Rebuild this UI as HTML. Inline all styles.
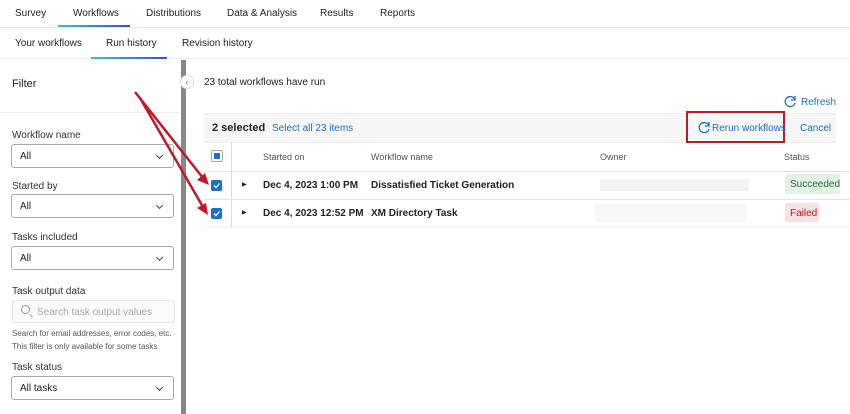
<!DOCTYPE html><html><head><style>
*{box-sizing:border-box;margin:0;padding:0}
body{width:850px;height:414px;overflow:hidden;background:#fff;font-family:"Liberation Sans",sans-serif;color:#222;position:relative;font-size:10px}
.a{position:absolute}
.nav1{top:0;left:0;width:850px;height:28px;border-bottom:1px solid #e8e8e8}
.nav2{top:28px;left:0;width:850px;height:31px;border-bottom:1px solid #eee}
.sel{border:1px solid #aaa;border-radius:3px;height:24px;width:163px;left:11px;font-size:10px;padding:6px 8px;background:#fff}
.sel:after{content:"";position:absolute;right:11px;top:8px;width:4px;height:4px;border-right:1px solid #444;border-bottom:1px solid #444;transform:rotate(45deg)}
.lbl{left:12px;font-size:10px;color:#333}
.cb{width:11px;height:11px;background:#1a6fd6;border-radius:2px}
.bold{font-weight:bold;font-size:10px}
</style></head><body>
<div class="a nav1"></div>
<div class="a" style="top:8px;left:15px">Survey</div>
<div class="a" style="top:8px;left:73px">Workflows</div>
<div class="a" style="top:8px;left:146px">Distributions</div>
<div class="a" style="top:8px;left:227px">Data &amp; Analysis</div>
<div class="a" style="top:8px;left:320px">Results</div>
<div class="a" style="top:8px;left:380px">Reports</div>
<div class="a" style="top:25px;left:58px;width:72px;height:2px;background:linear-gradient(90deg,#2cc6d6,#3355cc)"></div>
<div class="a nav2"></div>
<div class="a" style="top:38px;left:15px">Your workflows</div>
<div class="a" style="top:38px;left:106px">Run history</div>
<div class="a" style="top:38px;left:182px">Revision history</div>
<div class="a" style="top:57px;left:91px;width:76px;height:2px;background:linear-gradient(90deg,#2cc6d6,#3355cc)"></div>
<div class="a" style="top:60px;left:181px;width:5px;height:354px;background:#888"></div>
<div class="a" style="top:75px;left:180px;width:14px;height:14px;border-radius:7px;border:1px solid #ddd;background:#fff;font-size:9px;text-align:center;line-height:12px;color:#666">‹</div>
<div class="a" style="top:78px;left:12px;font-size:11px">Filter</div>
<div class="a" style="top:112px;left:0;width:180px;height:1px;background:#eee"></div>
<div class="a lbl" style="top:130px">Workflow name</div>
<div class="a sel" style="top:144px">All</div>
<div class="a lbl" style="top:181px">Started by</div>
<div class="a sel" style="top:194px">All</div>
<div class="a lbl" style="top:232px">Tasks included</div>
<div class="a sel" style="top:246px">All</div>
<div class="a lbl" style="top:286px">Task output data</div>
<div class="a" style="top:300px;left:12px;width:163px;height:23px;border:1px solid #e4e4e4;border-radius:3px;background:#fafafa;color:#aaa;padding:6px 0 0 24px">Search task output values</div>
<div class="a" style="top:305px;left:21px;width:9px;height:9px;border:1.3px solid #999;border-radius:50%"></div>
<div class="a" style="top:315px;left:29px;width:4px;height:1.3px;background:#999;transform:rotate(45deg)"></div>
<div class="a" style="top:327px;left:12px;font-size:8px;color:#555;line-height:13px">Search for email addresses, error codes, etc.<br>This filter is only available for some tasks</div>
<div class="a lbl" style="top:362px">Task status</div>
<div class="a sel" style="top:376px">All tasks</div>

<div class="a" style="top:77px;left:204px">23 total workflows have run</div>
<svg class="a" style="top:95px;left:783px" width="14" height="14" viewBox="0 0 14 14"><path d="M11.5 4A5 5 0 1 0 12 8" fill="none" stroke="#1a6fd6" stroke-width="1.3"/><path d="M12 1v4H8" fill="none" stroke="#1a6fd6" stroke-width="1.3"/></svg>
<div class="a" style="top:97px;left:801px;color:#1a6fd6">Refresh</div>
<div class="a" style="top:113px;left:204px;width:632px;height:30px;background:#f6f6f6;border-top:1px solid #eee;border-bottom:1px solid #eee"></div>
<div class="a" style="top:122px;left:212px;font-weight:bold;font-size:11px">2 selected</div>
<div class="a" style="top:123px;left:272px;color:#1a6fd6">Select all 23 items</div>
<div class="a" style="top:111px;left:686px;width:99px;height:32px;border:2px solid #c01a2a"></div>
<svg class="a" style="top:121px;left:697px" width="14" height="14" viewBox="0 0 14 14"><path d="M11.5 4A5 5 0 1 0 12 8" fill="none" stroke="#1a6fd6" stroke-width="1.3"/><path d="M12 1v4H8" fill="none" stroke="#1a6fd6" stroke-width="1.3"/></svg>
<div class="a" style="top:123px;left:712px;color:#1a6fd6">Rerun workflows</div>
<div class="a" style="top:123px;left:800px;color:#1a6fd6">Cancel</div>
<div class="a" style="top:143px;left:231px;width:1px;height:84px;background:#ddd"></div>
<div class="a" style="top:150px;left:211px;width:12px;height:12px;border:1px solid #aaa;border-radius:2px;background:#fff"></div>
<div class="a" style="top:153px;left:214px;width:6px;height:6px;background:#1a6fd6"></div>
<div class="a" style="top:152px;left:263px;font-size:9px;color:#555">Started on</div>
<div class="a" style="top:152px;left:371px;font-size:9px;color:#555">Workflow name</div>
<div class="a" style="top:152px;left:600px;font-size:9px;color:#555">Owner</div>
<div class="a" style="top:152px;left:784px;font-size:9px;color:#555">Status</div>
<div class="a" style="top:171px;left:204px;width:646px;height:1px;background:#e4e4e4"></div>
<div class="a" style="top:199px;left:204px;width:646px;height:1px;background:#e4e4e4"></div>
<div class="a" style="top:227px;left:204px;width:646px;height:1px;background:#f0f0f0"></div>
<div class="a cb" style="top:180px;left:211px"></div>
<div class="a cb" style="top:208px;left:211px"></div>
<div class="a" style="top:181px;left:242px;font-size:6px">▶</div>
<div class="a" style="top:209px;left:242px;font-size:6px">▶</div>
<div class="a bold" style="top:180px;left:263px">Dec 4, 2023 1:00 PM</div>
<div class="a bold" style="top:180px;left:371px">Dissatisfied Ticket Generation</div>
<div class="a bold" style="top:208px;left:263px">Dec 4, 2023 12:52 PM</div>
<div class="a bold" style="top:208px;left:371px">XM Directory Task</div>
<div class="a" style="top:179px;left:600px;width:149px;height:12px;background:#f3f3f3"></div>
<div class="a" style="top:204px;left:595px;width:152px;height:18px;background:#f7f7f7"></div>
<div class="a" style="top:174px;left:785px;width:55px;height:20px;background:#e4f1e6;border-radius:2px;color:#246b34;padding:5px 0 0 5px">Succeeded</div>
<div class="a" style="top:203px;left:785px;width:34px;height:19px;background:#f9e0e2;border-radius:2px;color:#b01c2c;padding:5px 0 0 5px">Failed</div>
<svg class="a" style="top:0;left:0" width="850" height="414"><g stroke="#c01a2a" stroke-width="2.5" fill="#c01a2a"><line x1="135" y1="92" x2="203" y2="178"/><line x1="140" y1="98" x2="203" y2="207"/></g><polygon points="209,185 197,180 205,173" fill="#c01a2a"/><polygon points="208,215 197,208 206,203" fill="#c01a2a"/></svg>
<svg class="a" style="top:180px;left:211px" width="11" height="11"><path d="M3 5.5l2 2 3.5-4" stroke="#fff" stroke-width="1.3" fill="none"/></svg>
<svg class="a" style="top:208px;left:211px" width="11" height="11"><path d="M3 5.5l2 2 3.5-4" stroke="#fff" stroke-width="1.3" fill="none"/></svg>
</body></html>
